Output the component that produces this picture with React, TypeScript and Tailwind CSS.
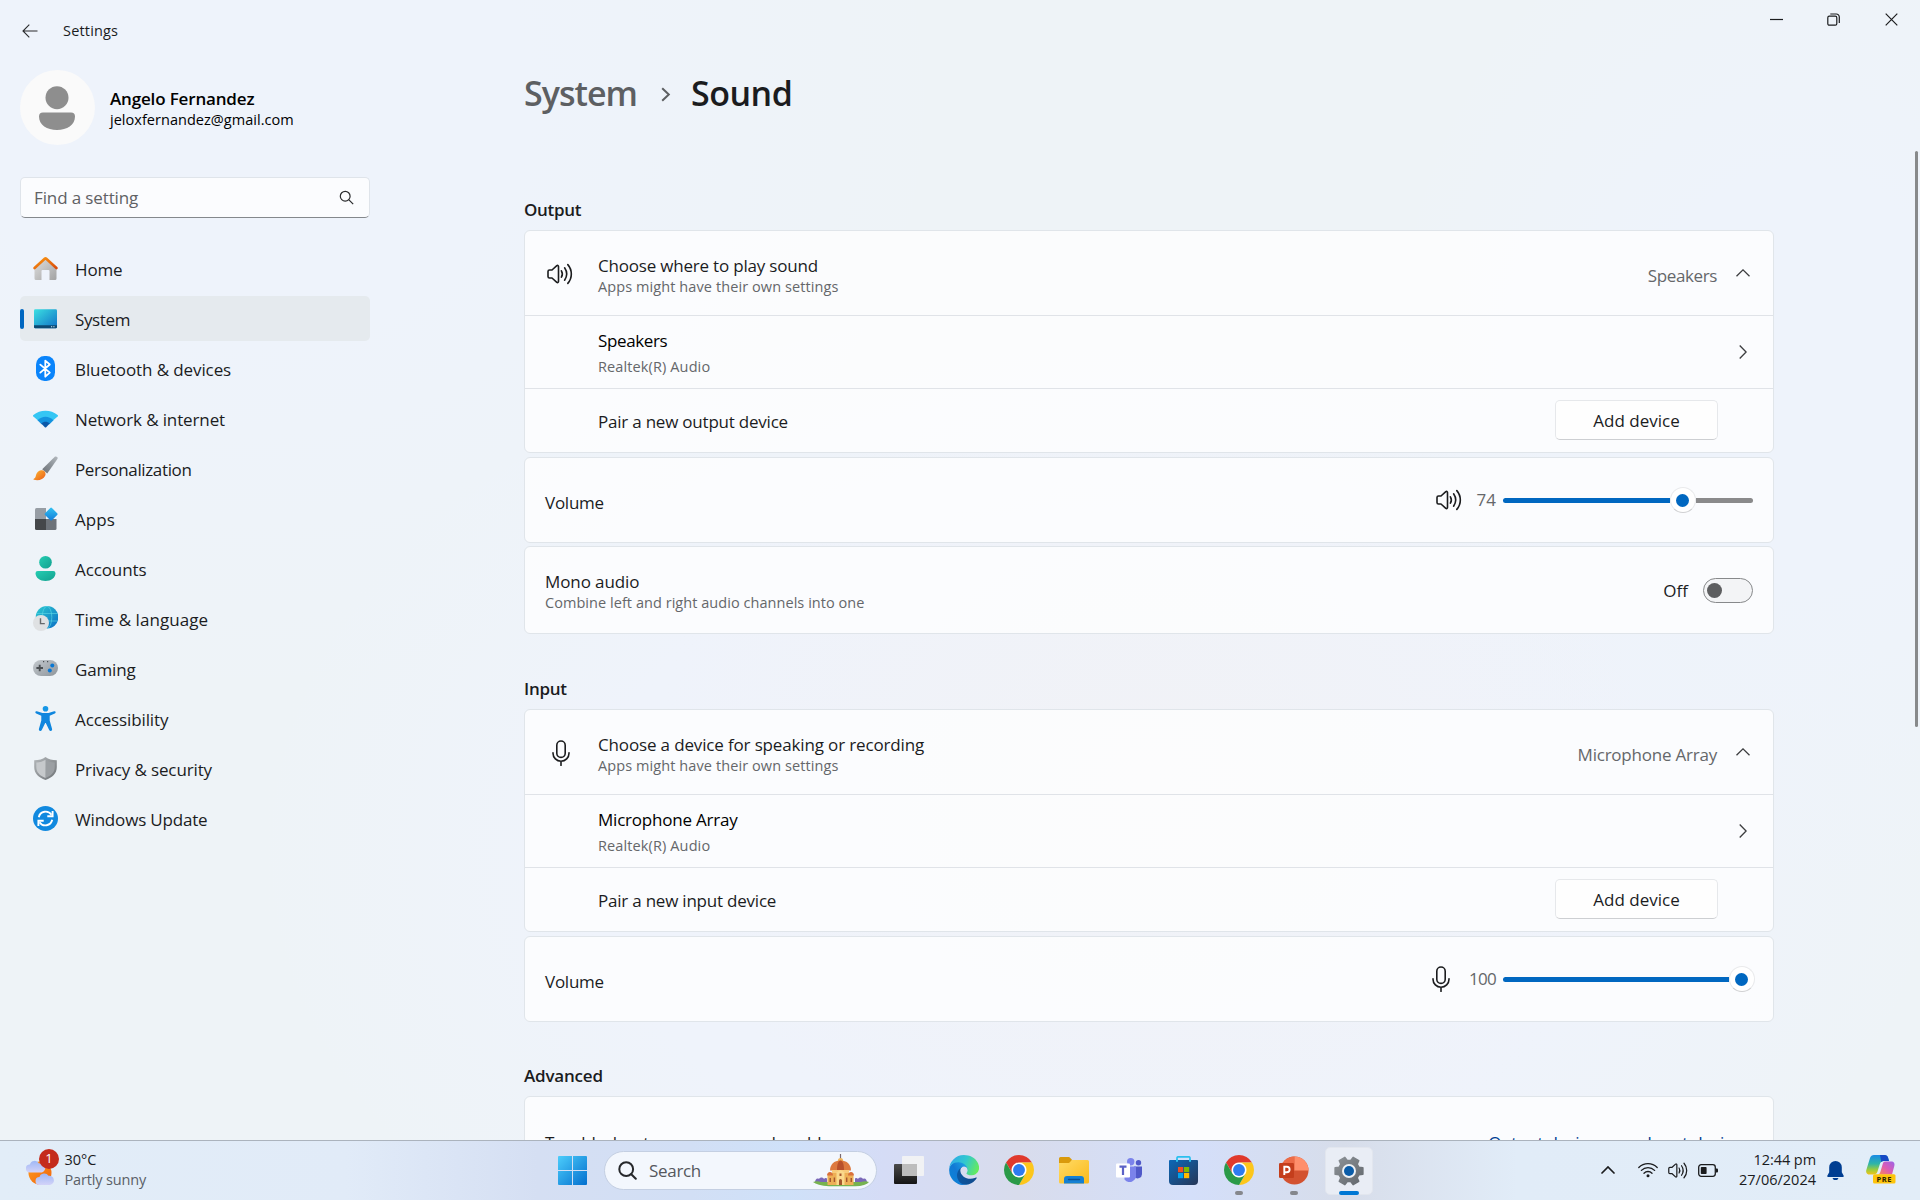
import React from "react";

/* ---------- line icons ---------- */

function SpeakerIcon({ className = "" }: { className?: string }) {
  return (
    <svg viewBox="0 0 26 22" className={className} fill="none" stroke="currentColor" strokeWidth="1.6" strokeLinecap="round" strokeLinejoin="round">
      <path d="M1 8.5v5A1.5 1.5 0 0 0 2.5 15H5l4.800 4.300a1 1 0 0 0 1.700-.7V3.400a1 1 0 0 0-1.700-.7L5 7H2.500A1.500 1.500 0 0 0 1 8.500z" />
      <path d="M14.400 7.800c1.200 2 1.200 4.400 0 6.400" />
      <path d="M17.600 4.800c2.600 3.800 2.600 8.600 0 12.400" />
      <path d="M20.800 1.600c4.700 5.400 4.700 13.400 0 18.800" />
    </svg>
  );
}

function MicIcon({ className = "" }: { className?: string }) {
  return (
    <svg viewBox="0 0 18 26" className={className} fill="none" stroke="currentColor" strokeWidth="1.6" strokeLinecap="round">
      <rect x="4.8" y="1" width="8.4" height="16.4" rx="4.2" />
      <path d="M1 12.8v.4a8 8 0 0 0 16 0v-.4M9 21.4v4" />
    </svg>
  );
}

function ChevronUp() {
  return (
    <svg viewBox="0 0 14 8" className="h-2 w-3.5" fill="none" stroke="#3c3d3f" strokeWidth="1.3">
      <path d="M.5 7.3 7 .9l6.5 6.4" />
    </svg>
  );
}

function ChevronRight() {
  return (
    <svg viewBox="0 0 8 14" className="h-3.5 w-2" fill="none" stroke="#3c3d3f" strokeWidth="1.3">
      <path d="M.7.5 7.1 7 .7 13.5" />
    </svg>
  );
}

/* ---------- sidebar icons ---------- */

const HomeIcon = () => (
  <svg viewBox="0 0 25 25" className="size-[25px]">
    <defs>
      <linearGradient id="hm" x1="0" y1="0" x2="1" y2="1"><stop offset="0" stopColor="#e0e0e0" /><stop offset="1" stopColor="#a2a2a2" /></linearGradient>
      <linearGradient id="hr" x1="0" y1="0" x2="1" y2="1"><stop offset="0" stopColor="#fb9a13" /><stop offset="1" stopColor="#d94a0a" /></linearGradient>
    </defs>
    <path d="M1.500 11 12.500 2l11 9v11.500a1.500 1.500 0 0 1-1.500 1.500H16.500V15a1 1 0 0 0-1-1h-6a1 1 0 0 0-1 1v9H3a1.500 1.500 0 0 1-1.500-1.500z" fill="url(#hm)" />
    <path d="M1.600 12 11.700 2.700a1.200 1.200 0 0 1 1.600 0L23.400 12" fill="none" stroke="url(#hr)" strokeWidth="2.600" strokeLinecap="round" />
  </svg>
);

const SystemIcon = () => (
  <svg viewBox="0 0 25 25" className="size-[25px]">
    <defs>
      <linearGradient id="sy" x1="0" y1="0" x2="1" y2="1"><stop offset="0" stopColor="#3be0e2" /><stop offset="1" stopColor="#0f6fc6" /></linearGradient>
    </defs>
    <rect x="1" y="3.300" width="23" height="19" rx="1.300" fill="url(#sy)" />
    <path d="M1 19.300h23V21a1.300 1.300 0 0 1-1.300 1.300H2.300A1.300 1.300 0 0 1 1 21z" fill="#0c4a73" />
    <path d="M18 20.300h1.200v1H18zM20.300 20.300h1.200v1h-1.200z" fill="#cfe6f2" />
  </svg>
);

const BluetoothIcon = () => (
  <svg viewBox="0 0 25 25" className="size-[25px]">
    <rect x="3" y="0" width="19" height="25" rx="8.500" fill="#0a84fb" />
    <path d="m7.300 8.600 9.500 8-4.500 4.100V4.600l4.500 3.900-9.500 8.100" fill="none" stroke="#fff" strokeWidth="1.800" strokeLinejoin="round" strokeLinecap="round" />
  </svg>
);

const NetworkIcon = () => (
  <svg viewBox="0 0 25 25" className="size-[25px]">
    <path d="M.4 10.600a1 1 0 0 1 0-1.600C7 3.200 18 3.200 24.600 9a1 1 0 0 1 0 1.600L20 14.500H5z" fill="#35c6f4" />
    <path d="M4.500 14.200C9 9.500 16 9.500 20.500 14.200l-4 4H8.500z" fill="#1493df" />
    <path d="M8.300 17.600c2.400-2.400 6-2.400 8.400 0l-3.500 3.600a1 1 0 0 1-1.400 0z" fill="#0b58a8" />
  </svg>
);

const BrushIcon = () => (
  <svg viewBox="0 0 25 25" className="size-[25px]">
    <defs>
      <linearGradient id="bh" x1="1" y1="0" x2="0" y2="1"><stop offset="0" stopColor="#b4b9bf" /><stop offset=".5" stopColor="#8b9197" /><stop offset="1" stopColor="#6c7177" /></linearGradient>
      <linearGradient id="bt" x1="0" y1="0" x2="1" y2="1"><stop offset="0" stopColor="#fdb833" /><stop offset="1" stopColor="#ea5d18" /></linearGradient>
    </defs>
    <path d="M21.800.8c1.500-1.200 3.700.5 2.600 2.300L14.200 17.400l-5-4.200z" fill="url(#bh)" />
    <path d="M8 14.300c3-.8 5.800 2.400 4 5.800-1.600 3.500-6.500 5-11.200 3.700-.5-.2-.4-.8 0-1 2-1 1.800-2.200 2.400-4.200.7-2.400 2.400-3.800 4.800-4.300z" fill="url(#bt)" />
  </svg>
);

const AppsIcon = () => (
  <svg viewBox="0 0 25 25" className="size-[25px]">
    <defs>
      <linearGradient id="ad" x1="0" y1="0" x2="1" y2="1"><stop offset="0" stopColor="#34c3f2" /><stop offset="1" stopColor="#127bd8" /></linearGradient>
    </defs>
    <path d="M2 3.500A1.500 1.500 0 0 1 3.500 2H13v11H2z" fill="#979da4" />
    <path d="M13 13h10.500v9.500A1.500 1.500 0 0 1 22 24h-9z" fill="#6d737a" />
    <path d="M2 13h11v11H3.500A1.500 1.500 0 0 1 2 22.500z" fill="#44474a" />
    <rect x="13.200" y="3.200" width="9.800" height="9.800" rx="1.200" transform="rotate(45 18.100 8.100)" fill="url(#ad)" />
  </svg>
);

const AccountsIcon = () => (
  <svg viewBox="0 0 25 25" className="size-[25px]">
    <defs>
      <linearGradient id="ac" x1="0" y1="0" x2="1" y2="1"><stop offset="0" stopColor="#25cdb2" /><stop offset="1" stopColor="#12a08f" /></linearGradient>
    </defs>
    <circle cx="12.500" cy="6.300" r="6.300" fill="url(#ac)" />
    <path d="M4.800 15h15.400a2.300 2.300 0 0 1 2.300 2.300c0 4.500-4.500 7.700-10 7.700s-10-3.200-10-7.700A2.300 2.300 0 0 1 4.800 15z" fill="url(#ac)" />
  </svg>
);

const TimeIcon = () => (
  <svg viewBox="0 0 25 25" className="size-[25px]">
    <defs>
      <linearGradient id="tg" x1="0" y1="0" x2="1" y2="1"><stop offset="0" stopColor="#2ccbd2" /><stop offset="1" stopColor="#0c6dc4" /></linearGradient>
    </defs>
    <circle cx="14" cy="11.300" r="11.300" fill="url(#tg)" />
    <path d="M3.600 7.500h20.800M3.600 15h20.800" stroke="#5ed9e6" strokeWidth="1" opacity=".6" />
    <ellipse cx="14" cy="11.300" rx="4.800" ry="11" fill="none" stroke="#5ed9e6" strokeWidth="1" opacity=".6" />
    <circle cx="8" cy="17" r="8" fill="#dfe1e3" />
    <path d="M7.500 12.300v5.300h4.300" fill="none" stroke="#66696c" strokeWidth="1.400" />
  </svg>
);

const GamingIcon = () => (
  <svg viewBox="0 0 25 25" className="size-[25px]">
    <defs>
      <linearGradient id="gm" x1="0" y1="0" x2="1" y2="1"><stop offset="0" stopColor="#c4c9ce" /><stop offset="1" stopColor="#8e959b" /></linearGradient>
    </defs>
    <rect x="0" y="4" width="25" height="16" rx="8" fill="url(#gm)" />
    <path d="M6.700 8.700v6.600M3.400 12h6.600" stroke="#4b4f53" strokeWidth="1.900" />
    <circle cx="19.300" cy="9.600" r="2" fill="#0a78d4" />
    <circle cx="16.800" cy="14.600" r="2" fill="#0a78d4" />
    <path d="M10 5h1.200v1.300H10zM14 5h1.200v1.300H14z" fill="#4b4f53" />
  </svg>
);

const AccessIcon = () => (
  <svg viewBox="0 0 25 25" className="size-[25px]">
    <circle cx="12.500" cy="2.800" r="2.800" fill="#1596e6" />
    <path d="M3.900 5.200 9.500 6.900h6l5.600-1.700c1.600-.4 2.200 1.700.7 2.400l-5.100 2.100v4.800l2.400 8.600c.3 1.800-2.100 2.500-2.900.9L12.800 17h-.6L8.800 24c-.8 1.600-3.200.9-2.900-.9l2.400-8.600V9.700L3.200 7.600c-1.500-.7-.9-2.800.7-2.400z" fill="#0f86de" />
  </svg>
);

const ShieldIcon = () => (
  <svg viewBox="0 0 25 25" className="size-[25px]">
    <defs>
      <linearGradient id="sh" x1="0" y1="0" x2="1" y2="1"><stop offset="0" stopColor="#b4b8bb" /><stop offset="1" stopColor="#6e7276" /></linearGradient>
    </defs>
    <path d="M12.500 1c3 2.200 6.500 3.200 11.300 3.200V11c0 6.500-4.300 10.600-11.300 13C5.500 21.600 1.200 17.500 1.200 11V4.200C6 4.200 9.500 3.200 12.500 1z" fill="url(#sh)" />
    <path d="M12.500 3.700c2.500 1.600 5.500 2.600 9.200 2.700V11c0 5.300-3.400 8.700-9.200 10.900z" fill="#9b9fa3" />
    <path d="M12.500 3.700C10 5.300 7 6.300 3.300 6.400V11c0 5.300 3.400 8.700 9.200 10.900z" fill="#c6c9cc" />
  </svg>
);

const UpdateIcon = () => (
  <svg viewBox="0 0 25 25" className="size-[25px]">
    <circle cx="12.500" cy="12.500" r="12.500" fill="#1189df" />
    <path d="M5.800 11.200a7 7 0 0 1 12.700-2.400M19.200 13.800A7 7 0 0 1 6.500 16.200" fill="none" stroke="#fff" strokeWidth="1.900" />
    <path d="M19.600 5v5.300h-5.300M5.400 20v-5.300h5.300" fill="none" stroke="#fff" strokeWidth="1.900" />
  </svg>
);

/* ---------- taskbar icons ---------- */

const StartIcon = () => (
  <svg viewBox="0 0 29 29" className="size-[29px]">
    <defs>
      <linearGradient id="st" gradientUnits="userSpaceOnUse" x1="0" y1="0" x2="29" y2="29"><stop offset="0" stopColor="#4ccdfb" /><stop offset="1" stopColor="#036fce" /></linearGradient>
    </defs>
    <path d="M1 0h13v14H0V1a1 1 0 0 1 1-1zM15 0h13a1 1 0 0 1 1 1v13H15zM0 15h14v14H1a1 1 0 0 1-1-1zM15 15h14v13a1 1 0 0 1-1 1H15z" fill="url(#st)" />
  </svg>
);

const PalaceIcon = () => (
  <svg viewBox="0 0 56 33" className="h-[33px] w-14">
    <path d="M2 28.500c0-3 2-5 4-3.500 1-2 4-2 5 0 1-1.500 3-1 3 0v4zM54 28.500c0-3-2-5-4-3.500-1-2-4-2-5 0-1-1.500-3-1-3 0v4z" fill="#7a68b8" />
    <path d="M0 28q4-1.500 8 0h40q4-1.500 8 0-3 4-14 4.300H16Q4 31.500 0 28z" fill="#77b350" />
    <path d="M27.500 0v5" stroke="#7a6a70" strokeWidth="1.200" />
    <path d="M24.800 7.200c0-2 1-3.200 2.700-3.200s2.700 1.200 2.700 3.200z" fill="#f0b55a" />
    <path d="M17 16.500c0-6 4-10 10.500-10S38 10.500 38 16.500z" fill="#dd7a40" />
    <path d="M24 16.500c0-6 1-9.500 3.500-10 2.500.5 3.500 4 3.500 10z" fill="#b9512c" />
    <path d="M19 16h17v4H19z" fill="#f7cb7b" />
    <path d="M14.500 21.500 19 19h17l4.500 2.500V31h-26z" fill="#edaf56" />
    <path d="M23.500 18.500 27.500 16l4 2.500V31h-8z" fill="#fad98c" />
    <path d="M14 21.500c0-2.300 1.300-3.500 3-3.500s3 1.200 3 3.500zM35 21.500c0-2.300 1.300-3.500 3-3.500s3 1.200 3 3.500z" fill="#d9713b" />
    <path d="M26 31v-4.500a1.500 1.500 0 0 1 3 0V31zM16.500 24H18v4h-1.500zM37.500 24H39v4h-1.500zM20.700 23.500h1.400v4.500h-1.400zM33 23.500h1.400v4.500H33zM26.500 19.500h2V22h-2z" fill="#a4562e" />
  </svg>
);

const TaskViewIcon = () => (
  <svg viewBox="0 0 30 28" className="h-7 w-[30px]">
    <defs>
      <linearGradient id="tv" x1="0" y1="0" x2="0" y2="1"><stop offset="0" stopColor="#4a4a4a" /><stop offset="1" stopColor="#151515" /></linearGradient>
    </defs>
    <rect x="0" y="8" width="23" height="20" rx="1" fill="url(#tv)" />
    <rect x="8" y="0" width="22" height="20" rx="1" fill="#f4f4f4" opacity=".9" />
    <path d="M8 8h15v12H8z" fill="#bdbdbd" />
  </svg>
);

const EdgeIcon = () => (
  <svg viewBox="-1 -2 258 256" className="size-[30px]">
    <defs>
      <linearGradient id="e1" x1="0" y1=".7" x2="1" y2=".7"><stop offset="0" stopColor="#0c59a4" /><stop offset="1" stopColor="#114a8b" /></linearGradient>
      <linearGradient id="e2" x1=".9" y1=".3" x2=".1" y2=".9"><stop offset="0" stopColor="#1b9de2" /><stop offset=".5" stopColor="#1279d4" /><stop offset="1" stopColor="#0a84d8" /></linearGradient>
      <linearGradient id="e3" x1="0" y1=".3" x2="1" y2=".6"><stop offset="0" stopColor="#2fa9e8" /><stop offset=".5" stopColor="#31c8cf" /><stop offset="1" stopColor="#66eb5b" /></linearGradient>
    </defs>
    <path fill="url(#e1)" d="M231 190.500c-3.300 1.700-6.700 3.300-10.200 4.600a101 101 0 0 1-35.900 6.500c-47.300 0-88.500-32.500-88.500-74.300a31.500 31.500 0 0 1 16.500-27.300c-42.800 1.800-53.800 46.400-53.800 72.500 0 73.800 68 81.300 82.700 81.300 7.900 0 19.800-2.300 27-4.600l1.300-.4a128 128 0 0 0 66.600-52.800 4 4 0 0 0-5.700-5.500z" />
    <path fill="url(#e2)" d="M105.700 241.400A79 79 0 0 1 83 220a80.700 80.700 0 0 1 30-120c3-1.500 8.400-4.100 15.500-4a32 32 0 0 1 25.700 13 32 32 0 0 1 6.300 18.700c0-.2 24.500-79.600-80-79.600-43.900 0-80 41.600-80 78.200a130 130 0 0 0 12.100 56 128 128 0 0 0 156.400 67 75.500 75.500 0 0 1-63.300-8z" />
    <path fill="url(#e3)" d="M152.300 148.900c-.8 1-3.300 2.500-3.300 5.700 0 2.600 1.700 5.200 4.800 7.300 14.600 10.200 42.200 8.900 42.300 8.900a60.600 60.600 0 0 0 30.800-8.500 62.500 62.500 0 0 0 30.900-53.700c.2-22.900-8.200-38.100-11.600-44.900C224.600 21.200 177.800-2 127-2A128 128 0 0 0-1 125.900c.5-36.500 36.800-66 80-66 3.500 0 23.500.3 42 10 16.300 8.600 24.900 19 30.900 29.300 6.100 10.600 7.200 24.100 7.200 29.500s-2.700 13.300-6.800 20.200z" />
  </svg>
);

const ChromeIcon = () => (
  <svg viewBox="0 0 48 48" className="size-[30px]">
    <circle cx="24" cy="24" r="13" fill="#fff" />
    <path d="M24 12h20.780A24 24 0 0 0 3.215 12l10.400 18A12 12 0 0 1 24 12z" fill="#e0392c" />
    <path d="M34.390 30 24 48a24 24 0 0 0 20.780-36H24a12 12 0 0 1 10.390 18z" fill="#fcc61c" />
    <path d="M13.610 30 3.218 12A24 24 0 0 0 24 48l10.390-18a12 12 0 0 1-20.780 0z" fill="#2a9a48" />
    <circle cx="24" cy="24" r="9.500" fill="#2d7bf0" />
  </svg>
);

const FolderIcon = () => (
  <svg viewBox="0 0 30 27" className="h-[27px] w-[30px]">
    <defs>
      <linearGradient id="fo" x1="0" y1="0" x2="1" y2="1"><stop offset="0" stopColor="#ffdb66" /><stop offset="1" stopColor="#fbb919" /></linearGradient>
    </defs>
    <path d="M0 1.500A1.500 1.500 0 0 1 1.500 0h8.700l2.600 2.500V7H0z" fill="#d99a0c" />
    <path d="M0 6h10l3-3h15.500A1.500 1.500 0 0 1 30 4.500V25a1.500 1.500 0 0 1-1.500 1.500h-27A1.500 1.500 0 0 1 0 25z" fill="url(#fo)" />
    <path d="M5 26.500V22a3 3 0 0 1 3-3h14a3 3 0 0 1 3 3v4.500z" fill="#1580d3" />
    <path d="M9.500 22.500h11" stroke="#0b4f92" strokeWidth="1.400" strokeLinecap="round" />
  </svg>
);

const TeamsIcon = () => (
  <svg viewBox="0 0 26 24" className="h-6 w-[26px]">
    <circle cx="22.500" cy="4.700" r="2.700" fill="#5059c9" />
    <circle cx="14.700" cy="3.700" r="3.700" fill="#7b83eb" />
    <path d="M18 8.500h8v7.500a4.300 4.300 0 0 1-7.500 3z" fill="#5059c9" />
    <path d="M8.500 8.500H20v8a6.500 6.500 0 0 1-11.500 5z" fill="#7b83eb" />
    <rect x="0" y="5.500" width="14" height="14" rx="1" fill="#fff" />
    <path d="M3.500 8.700h7M7 8.700v8.300" stroke="#5b62c6" strokeWidth="2.200" />
  </svg>
);

const StoreIcon = () => (
  <svg viewBox="0 0 29 29" className="size-[29px]">
    <defs>
      <linearGradient id="so" x1="0" y1="0" x2="1" y2="1"><stop offset="0" stopColor="#0c68b8" /><stop offset="1" stopColor="#263657" /></linearGradient>
    </defs>
    <path d="M8 5V2a1.200 1.200 0 0 1 1.200-1.200h10.600A1.200 1.200 0 0 1 21 2v3" fill="none" stroke="#2bc0ee" strokeWidth="1.700" />
    <path d="M1 4h27a1 1 0 0 1 1 1v20a4 4 0 0 1-4 4H4a4 4 0 0 1-4-4V5a1 1 0 0 1 1-1z" fill="url(#so)" />
    <path d="M7 3.500h2v2.200H7zM20 3.500h2v2.200h-2z" fill="#2bc0ee" />
    <path d="M9 11h5.200v5.200H9z" fill="#f25022" />
    <path d="M15 11h5.200v5.200H15z" fill="#7fba00" />
    <path d="M9 17h5.200v5.200H9z" fill="#00a4ef" />
    <path d="M15 17h5.200v5.200H15z" fill="#ffb900" />
  </svg>
);

const PowerPointIcon = () => (
  <svg viewBox="0 0 30 29" className="h-[29px] w-[30px]">
    <circle cx="15.500" cy="14.500" r="14" fill="#d35230" />
    <path d="M15.500.5v14h-14a14 14 0 0 1 14-14z" fill="#ed6c47" />
    <path d="M15.500.5a14 14 0 0 1 14 14h-14z" fill="#ff8f6b" />
    <rect x="0" y="7" width="15" height="15" rx="1.300" fill="#c43e1c" />
    <path d="M5.300 19v-8.200h2.600a2.700 2.700 0 0 1 0 5.400H5.600" fill="none" stroke="#fff" strokeWidth="1.900" />
  </svg>
);

function gearPath() {
  const pts: string[] = [];
  for (let i = 0; i < 6; i++) {
    const base = i * 60;
    for (const [off, r] of [[-20, 10.6], [-13, 14.2], [13, 14.2], [20, 10.6]]) {
      const a = ((base + off) * Math.PI) / 180;
      pts.push(`${(15 + r * Math.cos(a)).toFixed(2)} ${(15 + r * Math.sin(a)).toFixed(2)}`);
    }
  }
  return `M${pts.join("L")}Z`;
}

const GearIcon = () => (
  <svg viewBox="0 0 30 30" className="size-[30px]">
    <defs>
      <linearGradient id="ge" x1="0" y1="0" x2="1" y2="1"><stop offset="0" stopColor="#8d9297" /><stop offset="1" stopColor="#62676c" /></linearGradient>
    </defs>
    <path d={gearPath()} fill="url(#ge)" stroke="url(#ge)" strokeWidth="1.600" strokeLinejoin="round" />
    <circle cx="15" cy="15" r="7" fill="#eef1f5" />
    <circle cx="15" cy="15" r="5" fill="#0a5ca8" />
  </svg>
);

const CopilotIcon = () => (
  <svg viewBox="0 0 30 30" className="h-[30px] w-[30px]">
    <defs>
      <linearGradient id="c1" x1="0" y1="0" x2="0" y2="1"><stop offset="0" stopColor="#1a8be6" /><stop offset=".45" stopColor="#2fb5a8" /><stop offset=".75" stopColor="#9ccc3c" /><stop offset="1" stopColor="#f2c318" /></linearGradient>
      <linearGradient id="c2" x1="1" y1="0" x2="0" y2="1"><stop offset="0" stopColor="#9a63e8" /><stop offset=".5" stopColor="#dc5bb4" /><stop offset="1" stopColor="#fb8a52" /></linearGradient>
    </defs>
    <path d="M8 0h10.500c2 0 3 1 3.500 2.500L23 6h-5c-2.500 0-3.600 1.300-4.300 3.600l-2.200 7c-.7 2.200-1.700 3-4 3H4c-3 0-4.500-1.800-3.600-4.800L4 3C4.700.9 6 0 8 0z" fill="url(#c1)" />
    <path d="M14 0h4.500c2 0 3 1 3.500 2.500L23 6h-5c-1.200 0-2 .3-2.700.9z" fill="#1549c4" />
    <path d="M19 6.500h6c3 0 4 1.800 3.300 4.500L26 19.500H12c1.500-.5 2-1.500 2.500-3l2.200-7.500c.4-1.400 1-2.500 2.300-2.500z" fill="url(#c2)" />
    <rect x="7" y="19.300" width="22.500" height="9.200" rx="1.500" fill="#fdc40c" />
  </svg>
);

const WeatherIcon = () => (
  <svg viewBox="0 0 28 32" className="h-8 w-7">
    <defs>
      <linearGradient id="ws" x1="0" y1="0" x2="1" y2="1"><stop offset="0" stopColor="#ff9d1c" /><stop offset="1" stopColor="#f0620e" /></linearGradient>
      <linearGradient id="wc" x1="0" y1="0" x2="0" y2="1"><stop offset="0" stopColor="#9fb8f6" /><stop offset="1" stopColor="#d3d3f8" /></linearGradient>
    </defs>
    <circle cx="14" cy="19" r="11.500" fill="url(#ws)" />
    <path d="M4 18.500a4 4 0 0 1-.2-8A5 5 0 0 1 13 9.500a4.500 4.500 0 0 1 3 9z" fill="url(#wc)" />
    <path d="M13.500 31a4 4 0 0 1 0-8 5 5 0 0 1 9-1.200 4.600 4.600 0 0 1 1.500 9.200z" fill="url(#wc)" />
  </svg>
);

/* ---------- window ---------- */

const navItems = [
  { label: "Home", track: "tracking-[-0.14px]", icon: <HomeIcon /> },
  { label: "System", track: "tracking-[-0.38px]", icon: <SystemIcon />, active: true },
  { label: "Bluetooth & devices", track: "tracking-[-0.1px]", icon: <BluetoothIcon /> },
  { label: "Network & internet", track: "tracking-[-0.12px]", icon: <NetworkIcon /> },
  { label: "Personalization", track: "tracking-[-0.36px]", icon: <BrushIcon /> },
  { label: "Apps", track: "tracking-[0.09px]", icon: <AppsIcon /> },
  { label: "Accounts", track: "tracking-[-0.1px]", icon: <AccountsIcon /> },
  { label: "Time & language", track: "tracking-[0.06px]", icon: <TimeIcon /> },
  { label: "Gaming", track: "tracking-[-0.14px]", icon: <GamingIcon /> },
  { label: "Accessibility", track: "tracking-[-0.12px]", icon: <AccessIcon /> },
  { label: "Privacy & security", track: "tracking-[-0.13px]", icon: <ShieldIcon /> },
  { label: "Windows Update", track: "tracking-[-0.18px]", icon: <UpdateIcon /> },
];

function Sidebar() {
  return (
    <aside className="flex w-[370px] flex-col pl-5">
      <div className="flex h-[62px] items-center pl-0.5">
        <svg viewBox="0 0 16 14" className="h-3.5 w-4" fill="none" stroke="#2a2b2d" strokeWidth="1.1">
          <path d="M15.500 7H1M7.300.7 1 7l6.300 6.300" />
        </svg>
        <span className="ml-[25px] text-[14.5px] tracking-[0.18px]">Settings</span>
      </div>

      <div className="mt-2 flex h-[75px] items-center">
        <div className="flex size-[75px] items-center justify-center rounded-full bg-[#fafafa]">
          <svg viewBox="0 0 36 44" className="mr-px h-11 w-9" fill="#8e8e8e">
            <circle cx="18" cy="11.700" r="11.500" />
            <path d="M4 26.500h28a4 4 0 0 1 4 4C36 39 28 44 18 44S0 39 0 30.500a4 4 0 0 1 4-4z" />
          </svg>
        </div>
        <div className="ml-[15px] flex flex-col pt-0.5 text-black">
          <span className="text-[17px] leading-[22px] font-semibold tracking-[-0.16px]">Angelo Fernandez</span>
          <span className="text-[14.5px] leading-5 tracking-[0.03px]">jeloxfernandez@gmail.com</span>
        </div>
      </div>

      <div className="mt-8 flex h-[41px] items-center justify-between rounded-[5px] border border-b-[#84888c] border-[#dfe4ea] bg-[#fbfcfe] pr-[15px] pl-[13px]">
        <span className="text-[17px] tracking-[-0.12px] text-[#5f6164]">Find a setting</span>
        <svg viewBox="0 0 15 15" className="size-[15px]" fill="none" stroke="#2a2b2d" strokeWidth="1.200">
          <circle cx="6.200" cy="6.200" r="4.900" />
          <path d="m9.700 9.700 4.500 4.500" />
        </svg>
      </div>

      <nav className="mt-7 flex flex-col gap-[5px]">
        {navItems.map((n) => (
          <div key={n.label} className={n.active ? "flex h-[45px] items-center rounded-[5px] bg-[#e5eaee]" : "flex h-[45px] items-center"}>
            <div className={n.active ? "h-5 w-1 rounded-full bg-[#0067c0]" : "h-5 w-1"} />
            <div className="ml-[9px]">{n.icon}</div>
            <span className={`ml-[17px] pt-0.5 text-[17px] ${n.track}`}>{n.label}</span>
          </div>
        ))}
      </nav>
    </aside>
  );
}

const cardBox = "flex shrink-0 rounded-[6px] border border-[#e0e5ea] bg-white/75";

function DeviceCard(p: {
  icon: React.ReactNode;
  title: string;
  titleTrack: string;
  device: string;
  deviceTrack: string;
  pair: string;
  pairTrack: string;
}) {
  return (
    <div className={`mt-2 flex-col ${cardBox}`}>
      <div className="flex h-[84px] items-center pr-[23px]">
        <div className="flex w-[73px] items-center pt-0.5 pl-[22px]">{p.icon}</div>
        <div className="flex flex-1 flex-col pt-[5px]">
          <span className={`text-[17px] leading-[22px] ${p.titleTrack}`}>{p.title}</span>
          <span className="text-[14.5px] leading-5 tracking-[0.09px] text-[#65676a]">Apps might have their own settings</span>
        </div>
        <span className={`mr-[19px] pt-1.5 text-[17px] text-[#65676a] ${p.deviceTrack}`}>{p.device}</span>
        <div className="pb-px"><ChevronUp /></div>
      </div>
      <div className="flex h-[73px] items-center border-t border-[#e0e3e8] pr-[26px] pl-[73px]">
        <div className="flex flex-1 flex-col gap-0.5 pt-[3px]">
          <span className={`text-[17px] leading-6 text-black ${p.deviceTrack}`}>{p.device}</span>
          <span className="text-[14.5px] leading-6 tracking-[0.12px] text-[#65676a]">Realtek(R) Audio</span>
        </div>
        <ChevronRight />
      </div>
      <div className="flex h-16 items-center border-t border-[#e0e3e8] pr-[55px] pl-[73px]">
        <span className={`flex-1 pt-0.5 text-[17px] ${p.pairTrack}`}>{p.pair}</span>
        <button className="mb-px flex h-10 w-[163px] items-center justify-center rounded-[5px] border border-[#e6e8eb] border-b-[#cdcfd2] bg-[#fefefe] pt-0.5 text-[17px]">Add device</button>
      </div>
    </div>
  );
}

function VolumeCard({ icon, value, full }: { icon: React.ReactNode; value: string; full?: boolean }) {
  return (
    <div className={`mt-1 h-[86px] items-center pr-5 pl-5 ${cardBox}`}>
      <span className="flex-1 pt-[5px] text-[17px] tracking-[-0.25px]">Volume</span>
      {icon}
      <span className={full ? "mr-[7px] ml-[19px] text-[17px] tracking-[-0.7px] text-[#65676a]" : "mr-[7px] ml-[15px] text-[17px] text-[#65676a]"}>{value}</span>
      <div className="flex h-7 w-[250px] items-center">
        <div className={full ? "h-[5px] w-[226px] rounded-l-full bg-[#0067c0]" : "h-[5px] w-[167px] rounded-l-full bg-[#0067c0]"} />
        <div className={full ? "-mr-1 flex size-[26px] shrink-0 items-center justify-center rounded-full border border-[#e9eaec] border-b-[#cfd0d2] bg-white" : "flex size-[26px] shrink-0 items-center justify-center rounded-full border border-[#e9eaec] border-b-[#cfd0d2] bg-white"}>
          <div className="mr-px size-[13px] rounded-full bg-[#0067c0]" />
        </div>
        {!full && <div className="h-[5px] flex-1 rounded-r-full bg-[#8a8a8b]" />}
      </div>
    </div>
  );
}

function Main() {
  return (
    <main className="ml-[154px] flex w-[1250px] flex-col">
      <div className="mt-[68px] flex h-[50px] shrink-0 items-center text-[34px] font-semibold">
        <span className="w-[137px] text-[#5d5f62] tracking-[-1px]">System</span>
        <svg viewBox="0 0 10 15" className="mt-0.5 h-[15px] w-2.5" fill="none" stroke="#5d5f62" strokeWidth="2">
          <path d="m1.200 1.200 6.600 6.300-6.600 6.300" />
        </svg>
        <span className="ml-5 tracking-[-0.5px]">Sound</span>
      </div>

      <h2 className="mt-20 text-[17px] leading-6 font-semibold tracking-[-0.3px]">Output</h2>
      <DeviceCard
        icon={<SpeakerIcon className="h-[22px] w-[26px]" />}
        title="Choose where to play sound"
        titleTrack="tracking-[-0.2px]"
        device="Speakers"
        deviceTrack="tracking-[-0.38px]"
        pair="Pair a new output device"
        pairTrack="tracking-[-0.22px]"
      />
      <VolumeCard icon={<SpeakerIcon className="h-[22px] w-[26px]" />} value="74" />
      <div className={`mt-[3px] h-[88px] items-center px-5 ${cardBox}`}>
        <div className="flex flex-1 flex-col pt-[3px]">
          <span className="text-[17px] leading-[22px] tracking-[-0.1px]">Mono audio</span>
          <span className="text-[14.5px] leading-5 tracking-[0.05px] text-[#65676a]">Combine left and right audio channels into one</span>
        </div>
        <span className="mr-[15px] pt-0.5 text-[17px]">Off</span>
        <div className="flex h-[25px] w-[50px] items-center rounded-full border border-[#87898b] bg-[#f3f4f6] pl-[3px]">
          <div className="size-[15px] rounded-full bg-[#5d5e60]" />
        </div>
      </div>

      <h2 className="mt-[43px] text-[17px] leading-6 font-semibold tracking-[-0.25px]">Input</h2>
      <DeviceCard
        icon={<MicIcon className="ml-[4.5px] h-[26px] w-[18px]" />}
        title="Choose a device for speaking or recording"
        titleTrack="tracking-[-0.15px]"
        device="Microphone Array"
        deviceTrack="tracking-[-0.22px]"
        pair="Pair a new input device"
        pairTrack="tracking-[-0.22px]"
      />
      <VolumeCard icon={<MicIcon className="h-[26px] w-[18px]" />} value="100" full />

      <h2 className="mt-[42px] text-[17px] leading-6 font-semibold tracking-[-0.2px]">Advanced</h2>
      <div className={`mt-2 h-[86px] items-center px-5 pt-2 ${cardBox}`}>
        <span className="flex-1 text-[17px] tracking-[-0.18px]">Troubleshoot common sound problems</span>
        <span className="text-[17px] tracking-[-0.25px] text-[#003e92]">Output devices</span>
        <span className="mr-1 ml-[43px] text-[17px] tracking-[-0.25px] text-[#003e92]">Input devices</span>
      </div>
    </main>
  );
}

/* ---------- taskbar ---------- */

function Slot({ children, running }: { children: React.ReactNode; running?: boolean }) {
  return (
    <div className="relative flex h-[59px] w-[55px] items-center justify-center pb-px">
      {children}
      {running && <div className="absolute bottom-[5px] h-1 w-2 rounded-full bg-[#85878c]" />}
    </div>
  );
}

function Taskbar() {
  return (
    <footer className="flex h-[60px] items-center border-t border-[#abb3bd] bg-[linear-gradient(90deg,#e2edf8_0%,#e1ebf8_18%,#d5dff3_28%,#d2dff5_36%,#cfe1f9_41%,#d5dcf6_46%,#d8dcec_53%,#d4dffa_62%,#d7ddea_70%,#e1ecf8_79%,#e2edf8_100%)]">
      <div className="flex w-[558px] items-center pb-0.5 pl-[26px]">
        <div className="relative">
          <WeatherIcon />
          <div className="absolute -top-[5px] left-[13px] flex size-5 items-center justify-center rounded-full bg-[#c42b1c] text-[13px] text-white">1</div>
        </div>
        <div className="ml-[10.5px] flex flex-col text-[14.5px] leading-5">
          <span>30°C</span>
          <span className="tracking-[-0.16px] text-[#5a6067]">Partly sunny</span>
        </div>
      </div>

      <StartIcon />

      <div className="ml-[17px] flex h-[39px] w-[273px] items-center rounded-full border border-[#c4cfe2] bg-[#f3f7fd] pr-[7px] pl-[13px]">
        <svg viewBox="0 0 19 19" className="size-[19px]" fill="none" stroke="#26282b" strokeWidth="2" strokeLinecap="round">
          <circle cx="8.200" cy="8.200" r="6.900" />
          <path d="m13.300 13.300 4.500 4.500" />
        </svg>
        <span className="ml-[12px] flex-1 text-[17px] tracking-[-0.31px] text-[#55585d]">Search</span>
        <PalaceIcon />
      </div>

      <div className="ml-1 flex">
        <Slot><TaskViewIcon /></Slot>
        <Slot><EdgeIcon /></Slot>
        <Slot><ChromeIcon /></Slot>
        <Slot><FolderIcon /></Slot>
        <Slot><TeamsIcon /></Slot>
        <Slot><StoreIcon /></Slot>
        <Slot running><ChromeIcon /></Slot>
        <Slot running><PowerPointIcon /></Slot>
        <div className="relative ml-1 flex h-[59px] w-12 items-center justify-center">
          <div className="flex h-12 w-12 items-center justify-center rounded-[5px] border border-[#e2e6ee] bg-[#e9edf5]">
            <GearIcon />
          </div>
          <div className="absolute bottom-[5px] h-1 w-5 rounded-full bg-[#0078d4]" />
        </div>
      </div>

      <div className="ml-auto flex items-center pr-[24px] pb-px text-[#1b1c1e]">
        <svg viewBox="0 0 14 8" className="h-2 w-3.5" fill="none" stroke="currentColor" strokeWidth="1.700" strokeLinecap="round">
          <path d="M1 7l6-6 6 6" />
        </svg>
        <svg viewBox="0 0 20 16" className="ml-[23px] h-4 w-5" fill="none" stroke="currentColor" strokeWidth="1.300" strokeLinecap="round">
          <path d="M.8 5.500a13 13 0 0 1 18.400 0M3.400 8.400a9.300 9.300 0 0 1 13.200 0M6 11.200a5.600 5.600 0 0 1 8 0" />
          <circle cx="10" cy="13.800" r="1.500" fill="currentColor" stroke="none" />
        </svg>
        <SpeakerIcon className="ml-2.5 h-[17px] w-5" />
        <svg viewBox="0 0 20 13" className="ml-2.5 h-[13px] w-5" fill="none" stroke="currentColor" strokeWidth="1.300">
          <rect x=".7" y=".7" width="16.600" height="11.600" rx="2.500" />
          <rect x="2.800" y="3" width="5.800" height="7" rx=".8" fill="currentColor" stroke="none" />
          <path d="M18 4.500h1a1 1 0 0 1 1 1v2a1 1 0 0 1-1 1h-1z" fill="currentColor" stroke="none" />
        </svg>
        <div className="ml-[21px] flex flex-col items-end pb-px text-[14.5px] leading-5">
          <span className="tracking-[-0.07px]">12:44 pm</span>
          <span>27/06/2024</span>
        </div>
        <svg viewBox="0 0 17 19" className="ml-[11px] h-[19px] w-[17px]" fill="#003e92">
          <path d="M8.500 0A6.300 6.300 0 0 1 14.800 6.300v5l1.900 3.400a.8.8 0 0 1-.7 1.200H1a.8.8 0 0 1-.7-1.200l1.900-3.400v-5A6.300 6.300 0 0 1 8.500 0zM5.700 16.900h5.600a2.800 2.100 0 0 1-5.600 0z" />
        </svg>
        <div className="relative ml-[22px]">
          <CopilotIcon />
          <span className="absolute top-[19px] left-[7px] w-[22.5px] text-center text-[7.5px] leading-[10px] font-bold tracking-[0.5px] text-[#2b2100]">PRE</span>
        </div>
      </div>
    </footer>
  );
}

export default function App() {
  return (
    <div className="flex h-[1200px] w-[1920px] flex-col overflow-hidden bg-[#eef3f8] font-['Open_Sans','Noto_Sans',sans-serif] text-[#1b1c1e]">
      <div className="relative flex h-[1140px] overflow-hidden bg-[radial-gradient(ellipse_500px_420px_at_1150px_780px,#f1f2f6,transparent),radial-gradient(ellipse_700px_600px_at_250px_100px,#eef3fb_40%,transparent),radial-gradient(ellipse_420px_520px_at_1800px_380px,#eef3fb_40%,transparent),radial-gradient(ellipse_850px_560px_at_1100px_850px,#eff3fb_60%,transparent),linear-gradient(#eef3f7,#eef3f7)]">
        <Sidebar />
        <Main />
        <div className="absolute top-3 right-[22px] flex h-[14px] items-center gap-[49px] text-[#1b1c1e]">
          <svg viewBox="0 0 13 13" className="size-[13px]" stroke="currentColor" strokeWidth="1.200"><path d="M0 6.500h13" /></svg>
          <svg viewBox="0 0 13 13" className="-ml-[5px] size-[13px]" fill="none" stroke="currentColor" strokeWidth="1.200">
            <rect x=".8" y="3.200" width="9" height="9" rx="1.500" />
            <path d="M3.300 1h6a3 3 0 0 1 3 3v6" />
          </svg>
          <svg viewBox="0 0 13 13" className="-ml-[4px] size-[13px]" stroke="currentColor" strokeWidth="1.200"><path d="m.7.7 11.600 11.600M12.300.7.700 12.300" /></svg>
        </div>
        <div className="absolute top-[151px] right-[2px] h-[576px] w-[3px] rounded-full bg-[#87898b]" />
      </div>
      <Taskbar />
    </div>
  );
}
